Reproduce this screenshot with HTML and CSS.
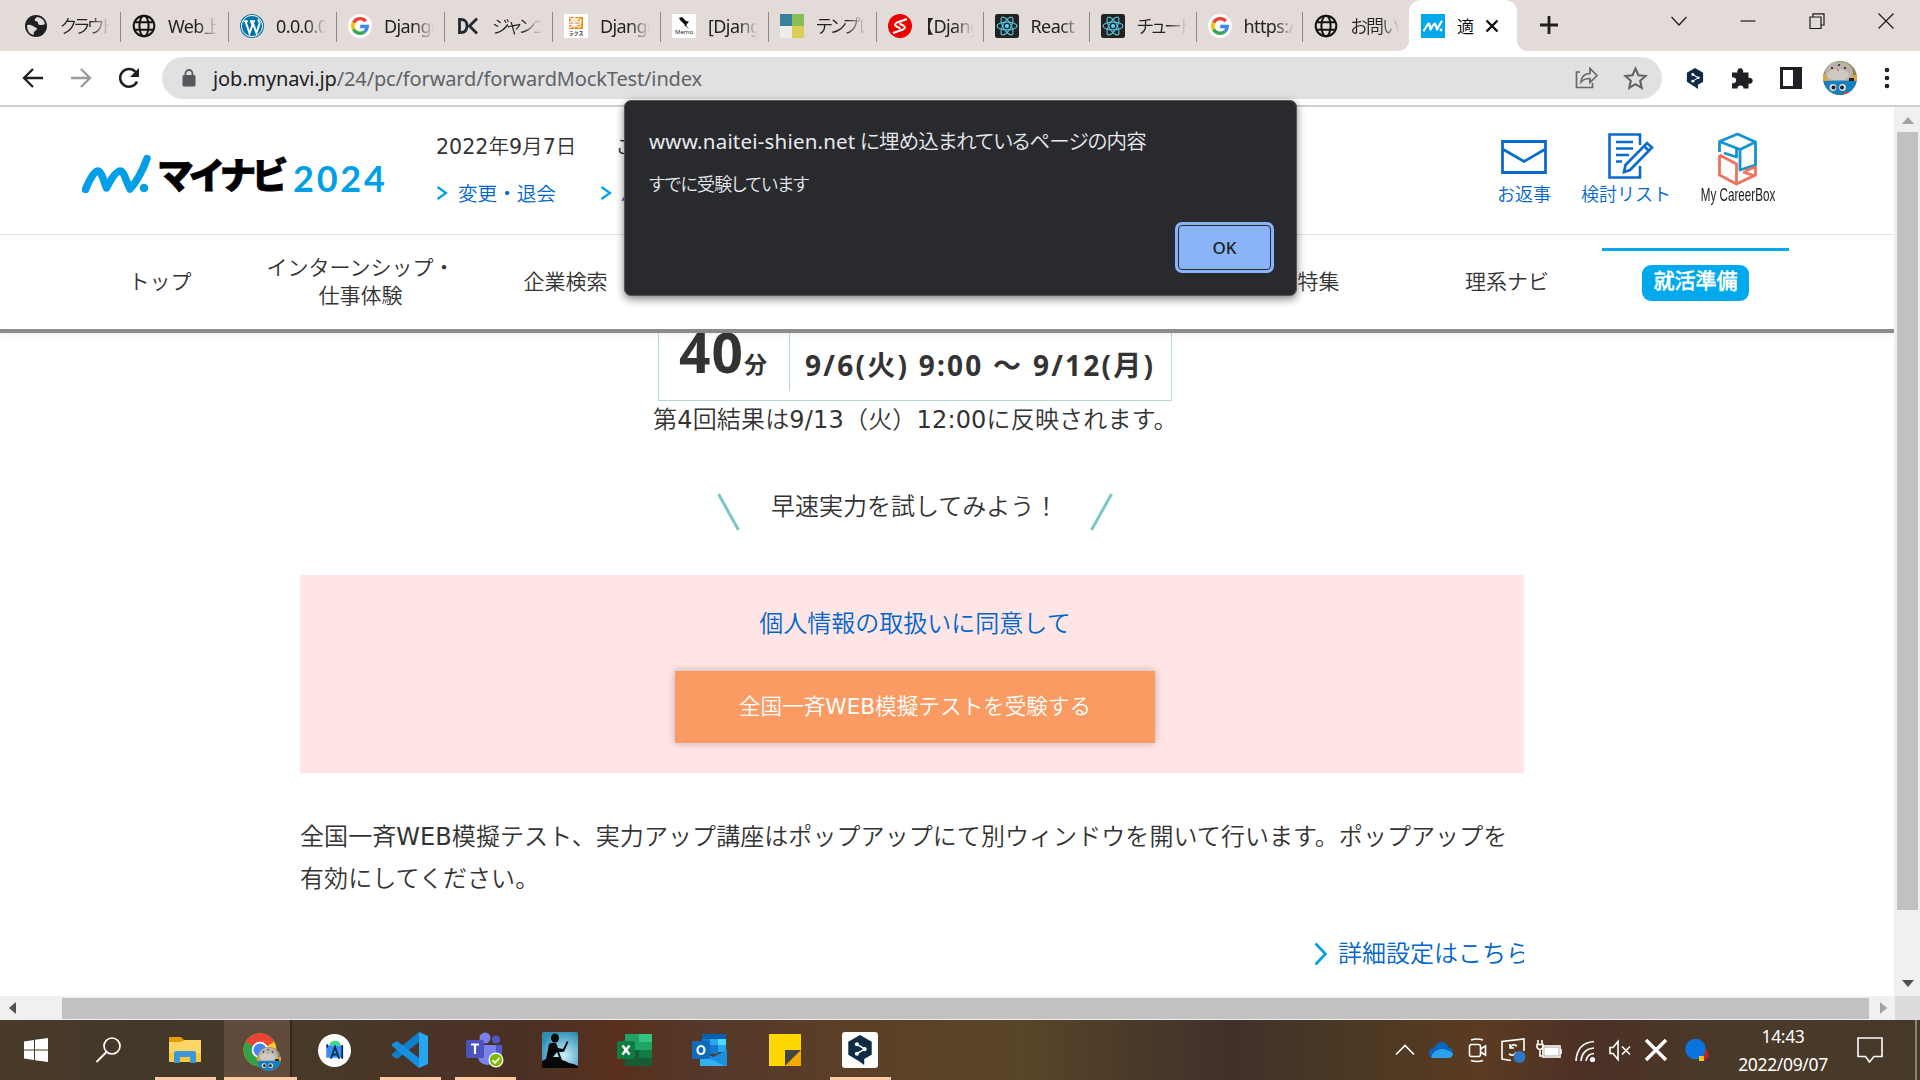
FILE: index.html
```html
<!DOCTYPE html>
<html lang="ja">
<head>
<meta charset="utf-8">
<title>適性検査 マイナビ2024</title>
<link rel="stylesheet" href="styles.css">
</head>
<body>
<svg class="defs" aria-hidden="true">
  <symbol id="globe" viewBox="0 0 24 24"><g fill="none" stroke="#111" stroke-width="2"><circle cx="12" cy="12" r="10.3"/><ellipse cx="12" cy="12" rx="4.6" ry="10.3"/><path d="M2.5 8.3h19M2.5 15.7h19"/></g></symbol>
  <symbol id="google" viewBox="0 0 24 24"><circle cx="12" cy="12" r="12" fill="#fff"/><g fill="none" stroke-width="3.4"><path d="M17.8 7.2A7.4 7.4 0 0 0 5.6 8.6" stroke="#ea4335"/><path d="M5.6 8.6a7.4 7.4 0 0 0 0 6.8" stroke="#fbbc05"/><path d="M5.6 15.4a7.4 7.4 0 0 0 11.2 2.2" stroke="#34a853"/><path d="M16.8 17.6a7.4 7.4 0 0 0 2.5-5.1H12.2" stroke="#4285f4"/></g></symbol>
  <symbol id="react" viewBox="0 0 24 24"><rect width="24" height="24" rx="2.5" fill="#222"/><g fill="none" stroke="#53c1de" stroke-width="1.2"><ellipse cx="12" cy="12" rx="10" ry="3.9"/><ellipse cx="12" cy="12" rx="10" ry="3.9" transform="rotate(60 12 12)"/><ellipse cx="12" cy="12" rx="10" ry="3.9" transform="rotate(120 12 12)"/></g><circle cx="12" cy="12" r="2" fill="#61dafb"/></symbol>
  <symbol id="deepl" viewBox="0 0 26 32"><path d="M13 0 25.5 7.2V21L17.5 25.6V32L12 28 .5 21V7.2Z" fill="#0f2b46"/><path d="M9.5 9.8 18 15 9.5 20" fill="none" stroke="#fff" stroke-width="1.6"/><g fill="#fff"><circle cx="9.7" cy="9.8" r="2.2"/><circle cx="18" cy="15" r="2.2"/><circle cx="9.7" cy="20" r="2.2"/></g></symbol>
  <symbol id="avatar" viewBox="0 0 34 34"><clipPath id="round"><circle cx="17" cy="17" r="17"/></clipPath><g clip-path="url(#round)"><path fill="#8d8052" d="M0 0h34v34H0z"/><path fill="#d9a63e" d="M0 13h8v7H0zM27 14h7v6h-7z"/><ellipse cx="16" cy="11.5" rx="14" ry="11" fill="#b9b2aa"/><ellipse cx="15" cy="14" rx="11" ry="6" fill="#cfc9c1"/><path fill="#1680bf" d="M0 20q17-1 34 0v14H0z"/><circle cx="10" cy="26.500" r="3.4" fill="#ddd"/><circle cx="19.500" cy="26.500" r="3.4" fill="#ddd"/><g fill="#222"><circle cx="10.5" cy="26.500" r="2"/><circle cx="19" cy="26.500" r="2"/><circle cx="9" cy="7" r="1.1"/><circle cx="22" cy="7" r="1.1"/><circle cx="16" cy="4" r="1"/><path d="M26 17h5v3h-5z"/></g><circle cx="15" cy="9" r="1" fill="#d66"/><path d="M20 31h4v2h-4z" fill="#c43"/></g></symbol>
  <symbol id="chev" viewBox="0 0 12 14"><path d="M1.5 1 10 7 1.5 13" fill="none" stroke="#00a0e9" stroke-width="2.2"/></symbol>
</svg>

<div class="tabs">
  <div class="tab"><svg class="fav" viewBox="0 0 24 24"><circle cx="12" cy="12" r="11" fill="#1d1f22"/><path d="M3 11q3-1 6 1t4 2q0 2-2 3t-1 4Q3 20 3 11ZM13 3q-3 2-2 4 3 0 3 2t3 2 4-1Q20 4 13 3Z" fill="#e3dbd8"/></svg><span class="t jp">クラウド</span></div>
  <div class="tab"><svg class="fav"><use href="#globe"/></svg><span class="t">Web上の</span></div>
  <div class="tab"><svg class="fav" viewBox="0 0 24 24"><circle cx="12" cy="12" r="12" fill="#0073aa"/><circle cx="12" cy="12" r="10.6" fill="none" stroke="#fff" stroke-width="1"/><path d="M3.6 7.2h4.2M10 7.2h5M5.5 7.5l4 11.5 3-8-1.4-3.5M12.3 7.5l4.2 11.5 3-9.2q.5-2.5-1.7-4.3" fill="none" stroke="#fff" stroke-width="2"/></svg><span class="t">0.0.0.0</span></div>
  <div class="tab"><svg class="fav"><use href="#google"/></svg><span class="t">Django</span></div>
  <div class="tab"><svg class="fav" viewBox="0 0 24 24"><path d="M3.500 5.500v13h1.500q6 0 6-6.500T5 5.500ZM21 4.500 13.500 12 21 19.500" fill="none" stroke="#242a33" stroke-width="2.800"/></svg><span class="t jp">ジャンゴ</span></div>
  <div class="tab"><span class="fav rakus"><b>楽!</b><i>ラクス</i></span><span class="t">Django</span></div>
  <div class="tab"><span class="fav memo"><svg viewBox="0 0 24 15"><path d="M7 4l3-1 4 4 3 .5-3 4-1.500-1.500-.5 0L8 6Z M13 10l4 5-5-4Z" fill="#111"/></svg><i>Memo</i></span><span class="t">[Django</span></div>
  <div class="tab"><svg class="fav" viewBox="0 0 24 24"><path fill="#37819a" d="M0 0h12v12H0z"/><path fill="#86bd55" d="M12 0h12v12H12z"/><path fill="#ededed" d="M0 12h12v12H0z"/><path fill="#dccd56" d="M12 12h12v12H12z"/></svg><span class="t jp">テンプレ</span></div>
  <div class="tab narrow"><svg class="fav" viewBox="0 0 24 24"><circle cx="12" cy="12" r="12" fill="#ee0000"/><path d="M19 5 9 8.500q-3.500 2-.5 4l4 2M5 19l10-3.500q3.500-2 .5-4l-4-2" fill="none" stroke="#fff" stroke-width="2"/></svg><span class="t shift">【Django</span></div>
  <div class="tab narrow"><svg class="fav"><use href="#react"/></svg><span class="t">React</span></div>
  <div class="tab narrow"><svg class="fav"><use href="#react"/></svg><span class="t jp">チュート</span></div>
  <div class="tab narrow"><svg class="fav"><use href="#google"/></svg><span class="t">https:/</span></div>
  <div class="tab narrow last"><svg class="fav"><use href="#globe"/></svg><span class="t jp2">お問い</span></div>
  <div class="tab active"><svg class="fav" viewBox="0 0 24 24"><path fill="#00a8ec" d="M0 0h24v24H0z"/><path d="M3 16.500 7 10q1-1 1.500.5l1 5L13 10q1-1 1.500.5l1.500 5 4.500-8" fill="none" stroke="#fff" stroke-width="2.200" stroke-linecap="round" stroke-linejoin="round"/><circle cx="20" cy="16" r="1.400" fill="#fff"/></svg><span class="one">適</span><svg class="close" viewBox="0 0 14 14"><path d="M1.500 1.500l11 11M12.500 1.500l-11 11" stroke="#111" stroke-width="2.400"/></svg></div>
  <svg class="plus" viewBox="0 0 18 18"><path d="M9 0v18M0 9h18" stroke="#1f1f1f" stroke-width="2.800"/></svg>
  <div class="win">
    <svg viewBox="0 0 16 16"><path d="M.5 4 8 12 15.500 4"/></svg>
    <svg viewBox="0 0 16 16"><path d="M.5 8h15"/></svg>
    <svg viewBox="0 0 16 16"><path d="M1 4h11v11.500H1ZM4 4V.800h11V12H12"/></svg>
    <svg viewBox="0 0 16 16"><path d="M.5.5l15 15M15.500.5l-15 15"/></svg>
  </div>
</div>

<div class="toolbar">
  <svg class="nav-i" viewBox="0 0 22 22"><path d="M21 11H2M11 2 2 11l9 9" fill="none" stroke="#1f1f1f" stroke-width="2.300"/></svg>
  <svg class="nav-i" viewBox="0 0 22 22"><path d="M1 11h19M11 2l9 9-9 9" fill="none" stroke="#9b9b9b" stroke-width="2.300"/></svg>
  <svg class="nav-i" viewBox="0 0 22 22"><path d="M19 14.500A8.800 8.800 0 1 1 17.500 5" fill="none" stroke="#1f1f1f" stroke-width="2.500"/><path d="M21 1v9h-9Z" fill="#1f1f1f"/></svg>
  <div class="omni">
    <svg class="lock" viewBox="0 0 14 18"><path d="M3.500 7V4.500a3.500 3.500 0 0 1 7 0V7" fill="none" stroke="#55585c" stroke-width="1.800"/><rect x=".5" y="6" width="13" height="11.500" rx="1.500" fill="#55585c"/></svg>
    <span class="url"><b>job.mynavi.jp</b>/24/pc/forward/forwardMockTest/index</span>
    <svg class="share" viewBox="0 0 24 22"><path d="M5 5H1.500v15.500h16V16M6 15q1-8.500 9-8.500V1.500l7 7-7 7v-4q-6 0-9 3.500Z" fill="none" stroke="#66696d" stroke-width="1.700"/></svg>
    <svg class="star" viewBox="0 0 24 24"><path d="M12 2.500l2.800 6.400 6.900.7-5.200 4.600 1.500 6.800-6-3.600-6 3.600 1.500-6.800L2.300 9.600l6.900-.7Z" fill="none" stroke="#5f6368" stroke-width="2"/></svg>
  </div>
  <div class="ext">
    <svg viewBox="0 0 26 32" style="width:18px;height:21px"><use href="#deepl"/></svg>
    <svg viewBox="0 0 22 22" style="width:22px;height:22px"><path d="M1 5.500h5.500a3 3 0 1 1 5.500 0H17.500V11a3 3 0 1 1 0 5.500V21.500h-5a3 3 0 1 0-6 0H1V16a3 3 0 1 0 0-5.500Z" fill="#1f1f24"/></svg>
    <svg viewBox="0 0 22 22" style="width:22px;height:22px"><path d="M1.500 1.500h19v19h-19Z" fill="#fff" stroke="#1f1f24" stroke-width="3"/><path d="M13 1h8v20h-8z" fill="#1f1f24"/></svg>
    <svg style="width:34px;height:34px"><use href="#avatar"/></svg>
    <svg viewBox="0 0 6 22" style="width:6px;height:22px"><g fill="#1f1f24"><circle cx="3" cy="3" r="2.300"/><circle cx="3" cy="11" r="2.300"/><circle cx="3" cy="19" r="2.300"/></g></svg>
  </div>
</div>

<div class="view">
  <div class="page">
    <header>
      <div class="head">
        <div class="logo">
          <svg viewBox="0 0 70 40"><path d="M3.500 36.500Q11 18 16 18q3 0 6 10l2.500 7Q33 18 38.500 18q3 0 6 10l3.500 8Q58 25 65 5.500" fill="none" stroke="#009fe8" stroke-width="7.500" stroke-linecap="round" stroke-linejoin="round"/><circle cx="62" cy="35" r="4.300" fill="#009fe8"/></svg>
          <span class="kana">マイナビ</span><span class="year">2024</span>
        </div>
        <div class="user">
          <div class="line"><span>2022年9月7日</span><span class="greet">ご</span></div>
          <div class="line links"><svg><use href="#chev"/></svg><a>変更・退会</a><svg class="second"><use href="#chev"/></svg><a>パ</a></div>
        </div>
        <div class="tools">
          <a class="mail"><svg viewBox="0 0 46 34"><path d="M1.500 1.500h43v31h-43ZM1.500 9 23 21.500 44.500 9" fill="none" stroke="#0b6bcd" stroke-width="2.800"/></svg>お返事</a>
          <a class="list"><svg viewBox="0 0 46 46"><g fill="none" stroke="#0b6bcd" stroke-width="2.600"><path d="M32 12V1.500H1.500v43H32V33M8 9h17M8 15.500h17M8 22h13M8 28.500h6M16 39l1.500-7L39 10l5 4.500L22 37ZM36 13l5 5"/></g></svg>検討リスト</a>
          <a class="box"><svg viewBox="0 0 42 54"><g fill="none" stroke-width="2.800" stroke-linejoin="round"><path d="M2.500 20V9.500L20.500 2l18 8v23L23 38V17.500L2.500 9.500M23 17.500 38.500 10M19.500 17V25L7 21" stroke="#1492d2"/><path d="M2.500 23v20L19.500 52 38.500 43V34M2.500 23 19.500 32V52M26 40l12.500 4M28 39l10-4" stroke="#f0705c"/></g></svg><span>My CareerBox</span></a>
        </div>
      </div>
      <nav>
        <a>トップ</a><a>インターンシップ・<br>仕事体験</a><a>企業検索</a><i></i><a>特集</a><a>理系ナビ</a><a class="on"><b>就活準備</b></a>
      </nav>
    </header>
    <main>
      <div class="exam"><div class="mins"><b>40</b>分</div><div class="term">9/6(火) 9:00 ～ 9/12(月)</div></div>
      <p class="result">第4回結果は9/13（火）12:00に反映されます。</p>
      <div class="try"><svg viewBox="0 0 24 38"><path d="M1.500 1 21.500 37"/></svg><span>早速実力を試してみよう！</span><svg viewBox="0 0 24 38"><path d="M22.500 1 2.500 37"/></svg></div>
      <section class="agree"><a>個人情報の取扱いに同意して</a><div class="btn">全国一斉WEB模擬テストを受験する</div></section>
      <p class="note">全国一斉WEB模擬テスト、実力アップ講座はポップアップにて別ウィンドウを開いて行います。ポップアップを<br>有効にしてください。</p>
      <div class="more"><svg viewBox="0 0 14 24"><path d="M1.500 1.500 11.500 12l-10 10.500" fill="none" stroke="#00a0e9" stroke-width="2.600"/></svg><a>詳細設定はこちら</a></div>
    </main>
  </div>
  <div class="vbar"><svg viewBox="0 0 12 7"><path d="M0 7 6 0l6 7Z" fill="#a3a3a3"/></svg><div class="thumb"></div><svg class="dn" viewBox="0 0 12 7"><path d="M0 0h12L6 7Z" fill="#505050"/></svg></div>
</div>
<div class="hbar"><svg viewBox="0 0 7 12"><path d="M7 0v12L0 6Z" fill="#505050"/></svg><div class="thumb"></div><svg class="rt" viewBox="0 0 7 12"><path d="M0 0v12l7-6Z" fill="#a3a3a3"/></svg><i></i></div>

<div class="taskbar">
  <div class="cell s"><svg viewBox="0 0 24 24" width="24" height="24"><path fill="#fff" d="M0 3.500 10 2v9.500H0ZM11 1.800 24 0v11.500H11ZM0 12.500h10V22L0 20.500ZM11 12.500h13V24l-13-1.800Z"/></svg></div>
  <div class="cell s"><svg viewBox="0 0 26 26" width="26" height="26"><circle cx="17" cy="9" r="8" fill="none" stroke="#fff" stroke-width="1.700"/><path d="M11.500 15 1.500 25" stroke="#fff" stroke-width="1.800"/></svg></div>
  <div class="cell run first"><svg viewBox="0 0 32 26" width="32" height="26"><path fill="#e2a000" d="M0 0h12l3 3-2 3H0z"/><path fill="#ffd566" d="M0 5h12l3-2h17v22H0z"/><path fill="#fbc93c" d="M0 16h32v9H0z"/><path fill="#3b98dc" d="M5 26V16q0-2 2-2h18q2 0 2 2v10h-6v-6H11v6z"/></svg></div>
  <div class="cell run cur"><svg viewBox="0 0 40 40" width="40" height="40"><circle cx="17" cy="18" r="16.500" fill="#fcc934"/><path d="M17 18 2.700 9.800A16.500 16.500 0 0 1 31.300 9.800H17Z" fill="#ea4335"/><path d="M17 18 2.700 9.800A16.500 16.500 0 0 0 17 34.500L24 22Z" fill="#34a04a"/><path d="M3 9.800h28.300L17 18Z" fill="#ea4335"/><circle cx="17" cy="18" r="8.300" fill="#fff"/><circle cx="17" cy="18" r="6.500" fill="#4285f4"/><use href="#avatar" x="14" y="15" width="24" height="24"/></svg></div>
  <div class="cell"><svg viewBox="0 0 32 32" width="33" height="33"><circle cx="16" cy="16" r="16" fill="#fff"/><path fill="#3b8bf5" d="M8 11h16v12H8z"/><path d="M11 11a5.500 4.500 0 0 1 11 0Z" fill="#3ddc84"/><path d="M12.500 24l4-11.500 4 11.500M14 20h5M23.500 11v13M9 10v3" stroke="#073042" stroke-width="1.700" fill="none"/></svg></div>
  <div class="cell run"><svg viewBox="0 0 36 36" width="36" height="36"><path d="M27 0 36 4v28l-9 4Z" fill="#25a7f2"/><path d="M27 0v10L5 27l-5-3v-2Z" fill="#0f7fcc"/><path d="M27 36V26L5 9 0 12v2Z" fill="#1590dd"/></svg></div>
  <div class="cell run"><svg viewBox="0 0 38 36" width="38" height="36"><circle cx="19" cy="6" r="5.500" fill="#7b83eb"/><circle cx="30" cy="7.500" r="4" fill="#5059c9"/><path fill="#5059c9" d="M22 13h14v11q-3 7-10 6z"/><path fill="#7b83eb" d="M12 13h18v13q-2 7-9 7-9-1-9-9z"/><rect y="8" width="18" height="18" rx="1.500" fill="#4b53bc"/><path d="M5 12.500h8M9 12.500V22" stroke="#fff" stroke-width="2.200"/><circle cx="30" cy="28" r="7.500" fill="#fff"/><circle cx="30" cy="28" r="6.200" fill="#7fba00"/><path d="M26.500 28l2.500 2.800 4.500-5" fill="none" stroke="#fff" stroke-width="1.800"/></svg></div>
  <div class="cell"><svg viewBox="0 0 36 36" width="36" height="36"><defs><radialGradient id="sky" cx=".6" cy=".65" r=".7"><stop offset="0" stop-color="#c9f1fb"/><stop offset="1" stop-color="#2c8db5"/></radialGradient></defs><rect width="36" height="36" rx="2" fill="url(#sky)"/><ellipse cx="13" cy="6" rx="4" ry="4.500" fill="#050708"/><path d="M7 12q3-2 7-1l2 5 5 1 4-8 1.500.7-4.500 10-5 .3 3 8q4 1 7 3 6 1 9 3v2H0v-7l4-2Z" fill="#050708"/><path d="M11 25l4-5 2 5Z" fill="#9fdff0"/></svg></div>
  <div class="cell"><svg viewBox="0 0 35 32" width="35" height="32"><path fill="#21a366" d="M8 0h14v16H8z"/><path fill="#33c481" d="M22 0h13v8H22z"/><path fill="#21a366" d="M22 8h13v8H22z"/><path fill="#107c41" d="M8 16h27v8H8z"/><path fill="#185c37" d="M8 16h14v8h13v8H8z"/><rect y="7" width="18" height="18" rx="1.500" fill="#107c41"/><path d="M5.500 11.500l7 9M12.500 11.500l-7 9" stroke="#fff" stroke-width="2.500"/></svg></div>
  <div class="cell"><svg viewBox="0 0 35 32" width="35" height="32"><path fill="#0a5eb0" d="M10 0h24v16H10z"/><path fill="#0f78d4" d="M10 5h8v8h-8z"/><path fill="#28a8ea" d="M18 5h8v6h-8z"/><path fill="#50d9ff" d="M26 5h8v6h-8z"/><path fill="#1478d0" d="M18 11h8v9h-8z"/><path fill="#28a8ea" d="M26 11h8v7h-8z"/><path fill="#1c8fe0" d="M35 16v16H8V16l13 7z"/><path fill="#35b0f0" d="M8 32V20l25 12z"/><rect y="7" width="18" height="18" rx="1.500" fill="#0f6cbd"/><ellipse cx="9" cy="16" rx="3.500" ry="4" fill="none" stroke="#fff" stroke-width="2.200"/></svg></div>
  <div class="cell"><svg viewBox="0 0 32 32" width="32" height="32"><path fill="#ffd800" d="M0 0h32v16L16 32H0z"/><path fill="#454545" d="M16 16h16L16 32z"/><path fill="#f2a900" d="M32 16v16H16z"/></svg></div>
  <div class="cell run"><svg viewBox="0 0 36 36" width="36" height="36"><rect width="36" height="36" rx="3" fill="#fff"/><use href="#deepl" x="5" y="3" width="26" height="30"/></svg></div>
  <div class="tray">
    <svg viewBox="0 0 36 26"><path d="M9 17.500l9-9 9 9"/></svg>
    <svg viewBox="0 0 36 26"><path d="M10 21q-4-1-4-5 1-5 5-5 3-7 9-6 4 1 5 5 5 1 5 6-1 5-4 5Z" fill="#0a66bd" stroke="none"/><path d="M8 20q4-9 13-8 9 3 9 5-1 4-4 4H10Z" fill="#29a4ea" stroke="none"/></svg>
    <svg viewBox="0 0 36 26"><rect x="10.500" y="7.500" width="11" height="12" rx="2"/><path d="M21.500 12l5-3v9l-5-3M12 3q6-2 12 0M12 23.500q6 2 12 0"/></svg>
    <svg viewBox="0 0 36 26"><path d="M29 14V2L7 4.500V22l9 1.500M22 9q-5-3-7 2M15 7v4h4M14 17q5 3 7-2"/><circle cx="24.500" cy="20" r="6" fill="#2e78c6" stroke="none"/></svg>
    <svg viewBox="0 0 36 26"><rect x="12" y="9" width="17" height="11"/><path d="M14 11h13v7H14z" fill="#fff"/><path d="M30 12v5M7 3v5M11 3v5M6 7.500h6v3q-3 4-6 0ZM9 12v7h3"/></svg>
    <svg viewBox="0 0 36 26"><path d="M9 24Q10 6 27 4.500M14 24q1-12 13-13M19 24q1-7 8-7.500"/><circle cx="25.500" cy="22.500" r="1.800" fill="#fff"/></svg>
    <svg viewBox="0 0 36 26"><path d="M7 10.500h3l5-6v18l-5-6H7ZM19 9.500l8 8M27 9.500l-8 8"/></svg>
    <svg viewBox="0 0 36 26"><path d="M7 3l20 20M27 3 7 23" stroke-width="3.500"/></svg>
    <svg class="wide" viewBox="0 0 46 26"><path d="M31 11q6 10-3 13l-4-4Z" fill="#c8201c" stroke="none"/><circle cx="20.500" cy="12" r="10.300" fill="#0b74dc" stroke="none"/><rect x="24" y="19" width="5" height="5" fill="#fcc21b" stroke="none"/></svg>
  </div>
  <div class="clock"><span>14:43</span><span>2022/09/07</span></div>
  <svg class="notif" viewBox="0 0 26 26"><path d="M1 1h24v18.500h-8L12.500 25 8.500 19.500H1Z" fill="none" stroke="#fff" stroke-width="1.600"/></svg>
  <i class="peek"></i>
</div>

<div class="dialog">
  <h1><span>www.naitei-shien.net</span> に埋め込まれているページの内容</h1>
  <p>すでに受験しています</p>
  <button>OK</button>
</div>
</body>
</html>
```
FILE: styles.css
```css
* { box-sizing: border-box; margin: 0; padding: 0; }
body {
  width: 1920px; height: 1080px; overflow: hidden; background: #fff;
  display: flex; flex-direction: column; position: relative;
  font-family: "Noto Sans", "Noto Sans CJK JP DemiLight", "Noto Sans CJK JP", sans-serif;
}
.defs { position: absolute; width: 0; height: 0; }
svg { display: block; flex: none; }

/* tab strip */
.tabs { height: 51px; flex: none; background: #e3dbd8; display: flex; padding-left: 13px; }
.tab { width: 108px; height: 51px; flex: none; display: flex; align-items: center; padding-left: 11px; gap: 12px; position: relative; }
.tab.narrow { width: 106.5px; }
.tab:not(.active):not(.last)::after { content: ""; position: absolute; right: 0; top: 12px; width: 1px; height: 30px; background: #8d8885; }
.fav { width: 24px; height: 24px; flex: none; }
.t { width: 50px; overflow: hidden; white-space: nowrap; font-size: 18px; line-height: 28px; color: #222; letter-spacing: -.6px; -webkit-mask-image: linear-gradient(90deg, #000 60%, transparent); mask-image: linear-gradient(90deg, #000 60%, transparent); }
.t.jp { font-feature-settings: "palt"; letter-spacing: -2.2px; }
.t.jp2 { letter-spacing: -2px; }
.t.shift { text-indent: -8px; }
.rakus, .memo { background: #fff; display: flex; flex-direction: column; align-items: center; overflow: hidden; }
.rakus b { font-size: 11px; line-height: 12px; margin-top: 3px; color: #fff; background: #ee8b1c; width: 14px; letter-spacing: -1px; }
.rakus i { font: bold 5px/7px "Noto Sans CJK JP", sans-serif; color: #444; }
.memo svg { width: 24px; height: 15px; }
.memo i { font: 6px/7px "Noto Sans", sans-serif; color: #222; }
.tab.active { background: #fff; border-radius: 12px 12px 0 0; width: 108px; padding-left: 12px; margin-left: -.5px; }
.tab.active::before, .tab.active::after { content: ""; position: absolute; bottom: 0; width: 10px; height: 10px; }
.tab.active::before { left: -10px; background: radial-gradient(circle at 0 0, transparent 9.5px, #fff 10px); }
.tab.active::after { right: -10px; background: radial-gradient(circle at 100% 0, transparent 9.5px, #fff 10px); }
.one { font-size: 17px; width: 17px; }
.close { width: 14px; height: 14px; margin-left: -1px; }
.plus { width: 18px; height: 18px; margin: 16px 0 0 22.500px; }
.win { display: flex; gap: 53px; margin: 13px 0 0 113px; }
.win svg { width: 16px; height: 16px; fill: none; stroke: #1a1a1a; stroke-width: 1.200; }

/* toolbar */
.toolbar { height: 56px; flex: none; border-bottom: 2px solid #cfcfcf; display: flex; align-items: center; padding-left: 22px; }
.nav-i { width: 22px; height: 22px; margin-right: 26px; }
.omni { width: 1500px; height: 42px; border-radius: 21px; background: #e1e1e1; display: flex; align-items: center; padding-left: 20px; margin-left: -4px; }
.lock { width: 14px; height: 18px; margin-right: 17px; }
.url { font-size: 20px; line-height: 28px; color: #5f6368; letter-spacing: -.14px; flex: 1; padding-top: 1px; }
.url b { font-weight: 400; color: #202124; }
.share { width: 24px; height: 22px; margin-right: 24px; }
.star { width: 25px; height: 25px; margin-right: 14px; }
.ext { display: flex; align-items: center; gap: 26.500px; margin-left: 24px; }
.ext svg:nth-child(3) { margin-left: 1px; }
.ext svg:nth-child(4) { margin-left: -6px; }
.ext svg:nth-child(5) { margin-left: 1px; }

/* viewport */
.view { height: 889px; flex: none; display: flex; }
.page { width: 1894px; overflow: hidden; background: #fff; color: #333; font-family: "DejaVu Sans", "Noto Sans CJK JP DemiLight", "Noto Sans CJK JP Light", "Noto Sans CJK JP", sans-serif; display: flex; flex-direction: column; }
header { height: 226px; flex: none; border-bottom: 4px solid #8a8c8b; box-shadow: 0 3px 6px rgba(0,0,0,.06); position: relative; background: #fff; }
.head { height: 128px; border-bottom: 1px solid #e3e3e3; display: flex; padding-left: 82px; }
.logo { display: flex; width: 354px; padding-top: 46px; }
.logo svg { width: 70px; height: 40px; }
.kana { font: 900 36.500px/41px "Noto Sans CJK JP", sans-serif; color: #000; letter-spacing: -4.700px; margin-left: 5px; width: 136px; -webkit-text-stroke: .8px #000; }
.year { font: 700 36px/50px Lato, sans-serif; color: #009fe8; letter-spacing: 2.800px; }
.user { width: 620px; padding-top: 23px; }
.line { height: 30px; display: flex; align-items: center; font-size: 20.600px; white-space: nowrap; }
.greet { margin-left: 39px; }
.links { margin-top: 17px; font-size: 19.600px; color: #0066cc; }
.links svg { width: 12px; height: 14px; margin-right: 10px; margin-top: 2px; }
.links .second { margin-left: 44px; margin-right: 8px; }
.tools { display: flex; margin-left: 430px; color: #0066cc; font-size: 18px; line-height: 26px; }
.tools a { display: flex; flex-direction: column; align-items: center; white-space: nowrap; }
.mail { width: 76px; padding-top: 33px; }
.mail svg { width: 46px; height: 34px; margin-bottom: 8px; }
.list { width: 128px; padding-top: 26px; }
.list svg { width: 46px; height: 46px; margin: 0 0 3px 10px; }
.box { width: 98px; padding-top: 25px; color: #222; }
.box svg { width: 42px; height: 54px; margin-right: 3px; }
.box span { font: 18.500px/17px "Liberation Sans", sans-serif; transform: scaleX(.63); width: 120px; text-align: center; margin-left: -3px; }
nav { height: 94px; display: grid; grid-template-columns: 188px 213px 197px 560px 189px 188px 188px; padding-left: 66px; font-size: 21px; line-height: 28px; }
nav a { display: flex; align-items: center; justify-content: center; text-align: center; white-space: nowrap; padding-bottom: 1px; }
nav .on { border-top: 3px solid #00a8ec; margin-top: 13px; align-items: flex-start; padding-top: 14px; margin-left: 1px; }
nav .on b { background: #00a8ec; color: #fff; border-radius: 9px; width: 107px; height: 36px; line-height: 33px; }

main { padding-left: 300px; width: 1524px; flex: 1; display: flex; flex-direction: column; }
.exam { width: 514px; height: 68px; margin-left: 358px; border: 1px solid #b5d8d8; border-top: 0; display: flex; font-family: "Noto Sans", "Noto Sans CJK JP", sans-serif; font-weight: 700; flex: none; color: #333; }
.mins { width: 131px; height: 58px; border-right: 1px solid #b5d8d8; padding-left: 20px; font-size: 23px; line-height: 37px; white-space: nowrap; flex: none; }
.mins b { font-size: 55px; line-height: 37px; font-family: "Noto Sans", sans-serif; font-weight: 700; letter-spacing: 1px; }
.term { font-size: 28px; line-height: 65px; letter-spacing: 2.250px; padding-left: 15px; white-space: nowrap; }
.result { font-size: 24px; line-height: 39px; margin-left: 353px; height: 36px; white-space: nowrap; letter-spacing: .18px; }
.try { display: flex; margin: 56px 0 0 417px; font-size: 24px; line-height: 28px; }
.try svg { width: 24px; height: 38px; fill: none; stroke: #7cc6c9; stroke-width: 3; }
.try span { width: 348px; padding-left: 30px; white-space: nowrap; }
.agree { height: 198px; margin-top: 44px; background: #ffe5e5; display: flex; flex-direction: column; align-items: center; padding: 28px 0 0 6px; font-size: 24px; line-height: 42px; color: #0066cc; flex: none; }
.btn { width: 480px; height: 72px; margin-top: 26px; background: #f99b62; color: #fff; font-size: 21.600px; line-height: 71px; text-align: center; box-shadow: 0 0 8px rgba(0,0,0,.25); }
.note { font-size: 24px; line-height: 42px; margin-top: 43px; white-space: nowrap; letter-spacing: .07px; }
.more { display: flex; align-items: center; width: 210px; margin: 33px 0 0 1014px; overflow: hidden; color: #0066cc; font-size: 24px; line-height: 42px; white-space: nowrap; flex: none; }
.more svg { width: 14px; height: 24px; margin-right: 10px; }

/* scrollbars */
.vbar { width: 26px; background: #f0f0f0; display: flex; flex-direction: column; align-items: center; padding: 10px 0 0 1px; }
.vbar svg { width: 12px; height: 7px; }
.vbar .thumb { width: 21px; height: 778px; background: #c1c1c1; margin: 8px 0 70px; }
.hbar { height: 24px; flex: none; background: #f0f0f0; display: flex; align-items: center; padding-left: 9px; }
.hbar svg { width: 7px; height: 12px; }
.hbar .thumb { width: 1807px; height: 21px; background: #c1c1c1; margin-left: 46px; }
.hbar .rt { margin-left: 11px; }
.hbar i { width: 25px; height: 24px; background: #dcdcdc; margin-left: auto; }

/* taskbar */
.taskbar { height: 60px; flex: none; display: flex; align-items: center; background: linear-gradient(90deg, #4a3b29 0, #42372a 150px, #473a28 300px, #4a3427 420px, #4a3024 520px, #59301d 620px, #54382a 700px, #5b3f27 850px, #594528 1020px, #40302a 1230px, #4a3824 1340px, #5b3b22 1480px, #4b3025 1590px, #4a3a29 1720px, #463928 1920px); }
.cell { width: 75px; height: 60px; flex: none; display: flex; align-items: center; justify-content: center; position: relative; }
.cell:not(.s):not(.cur) svg { margin-right: 2px; }
.cell.s { width: 72px; }
.cell.first { margin-left: 4px; }
.cell.run::after { content: ""; position: absolute; left: 7px; bottom: 0; width: 61px; height: 3px; background: #ffc9a4; }
.cell.cur { background: linear-gradient(90deg, transparent 1px, #5f4a3b 1px 67px, #31271e 67px 69px, transparent 69px); }
.cell.cur::after { left: 1px; width: 73px; }
.cell.cur svg { margin-left: 5px; margin-top: 4px; }
.tray { display: flex; margin-left: 489px; }
.tray svg { width: 36px; height: 26px; fill: none; stroke: #fff; stroke-width: 1.600; }
.tray .wide { width: 46px; }
.clock { width: 134px; display: flex; flex-direction: column; align-items: center; color: #fff; font-size: 17.500px; line-height: 28px; letter-spacing: -.35px; margin-left: -5px; margin-top: -1px; }
.notif { width: 26px; height: 26px; margin-left: 7px; }
.peek { width: 2px; height: 60px; background: #8b8378; margin-left: 32px; }

/* alert over the page */
.dialog { position: absolute; left: 624px; top: 100px; width: 673px; height: 196px; background: #292a2d; border-radius: 7px; border: 1px solid #55565a; box-shadow: 0 3px 8px rgba(0,0,0,.5); color: #e8eaed; padding: 25px 21px 21px 24px; display: flex; flex-direction: column; }
.dialog h1 { font-weight: 400; font-size: 20.500px; line-height: 30px; font-feature-settings: "palt"; letter-spacing: -.8px; white-space: nowrap; }
.dialog h1 span { letter-spacing: .2px; }
.dialog p { font-size: 18px; line-height: 28px; margin-top: 14px; font-feature-settings: "palt"; letter-spacing: -.8px; }
.dialog button { margin: auto 4px 4px auto; width: 93px; height: 45px; font: 500 17px "Noto Sans", sans-serif; color: #202124; background: #8ab4f8; border: 1.500px solid #292a2d; border-radius: 4px; box-shadow: 0 0 0 3px #8ab4f8; }
```
